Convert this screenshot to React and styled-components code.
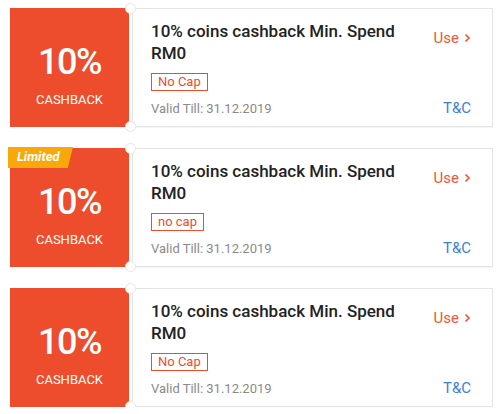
import React from "react";
import styled, { createGlobalStyle } from "styled-components";

const GlobalStyle = createGlobalStyle`
  html, body {
    margin: 0;
    padding: 0;
    background: #fff;
    font-family: Roboto, "Liberation Sans", Arial, sans-serif;
  }
`;

const List = styled.div`
  display: flex;
  flex-direction: column;
  gap: 21px;
  padding: 8px 7px 0 10px;
  width: 500px;
  box-sizing: border-box;
`;

const Ticket = styled.div`
  position: relative;
  display: flex;
  height: 119px;

  /* notches between the stub and the card */
  &::before,
  &::after {
    content: "";
    position: absolute;
    left: 115px;
    width: 9px;
    height: 9px;
    border-radius: 50%;
    background: #fff;
    border: 1px solid #e6e6e6;
    z-index: 2;
  }
  &::before {
    top: -5px;
  }
  &::after {
    bottom: -5px;
  }
`;

const Stub = styled.div`
  position: relative;
  flex: 0 0 119px;
  background: #ee4d2d;
  color: #fff;
  display: flex;
  flex-direction: column;
  align-items: center;
  padding-top: 34px;
  box-sizing: border-box;
`;

const Percent = styled.div`
  font-size: 36px;
  font-weight: 500;
  line-height: 40px;
  letter-spacing: -1.5px;
`;

const StubLabel = styled.div`
  font-size: 13px;
  line-height: 16px;
  margin-top: 10px;
`;

const Badge = styled.div`
  position: absolute;
  top: -1px;
  left: -2px;
  height: 21px;
  width: 65px;
  background: #f9a80a;
  clip-path: polygon(0 0, 100% 0, 92% 100%, 0 100%);
  color: #fff;
  font-size: 13px;
  font-weight: 700;
  font-style: italic;
  line-height: 20px;
  padding-left: 9px;
  box-sizing: border-box;
`;

const Card = styled.div`
  flex: 1;
  margin-left: 3px;
  border: 1px solid #e4e4e4;
  box-shadow: 0 1px 1px rgba(0, 0, 0, 0.04);
  display: flex;
  padding: 11px 21px 9px 18px;
`;

const Info = styled.div`
  flex: 1;
  display: flex;
  flex-direction: column;
  align-items: flex-start;
`;

const Title = styled.div`
  font-size: 17px;
  font-weight: 500;
  line-height: 22px;
  color: #222;
  width: 250px;
`;

const Tag = styled.div`
  margin-top: 9px;
  border: 1px solid #ee4d2d;
  color: #ee4d2d;
  font-size: 13px;
  line-height: 16px;
  padding: 0 6px;
`;

const Valid = styled.div`
  margin-top: auto;
  font-size: 13px;
  line-height: 16px;
  color: #8a8a8a;
`;

const Actions = styled.div`
  display: flex;
  flex-direction: column;
  align-items: flex-end;
  justify-content: space-between;
  padding-top: 9px;
`;

const Use = styled.div`
  display: flex;
  align-items: center;
  gap: 5px;
  font-size: 15px;
  line-height: 18px;
  color: #ee5838;
`;

const Terms = styled.div`
  font-size: 15px;
  line-height: 18px;
  color: #3e7fd8;
`;

const Chevron = () => (
  <svg width="7" height="10" viewBox="0 0 7 10">
    <path d="M1.5 1.5 L5 5 L1.5 8.5" fill="none" stroke="#ee5838" strokeWidth="1.7" />
  </svg>
);

const vouchers = [
  { id: 1, cap: "No Cap" },
  { id: 2, cap: "no cap", limited: true },
  { id: 3, cap: "No Cap" },
];

export default function App() {
  return (
    <>
      <GlobalStyle />
      <List>
        {vouchers.map((v) => (
          <Ticket key={v.id}>
            <Stub>
              {v.limited && <Badge>Limited</Badge>}
              <Percent>10%</Percent>
              <StubLabel>CASHBACK</StubLabel>
            </Stub>
            <Card>
              <Info>
                <Title>10% coins cashback Min. Spend RM0</Title>
                <Tag>{v.cap}</Tag>
                <Valid>Valid Till: 31.12.2019</Valid>
              </Info>
              <Actions>
                <Use>
                  Use <Chevron />
                </Use>
                <Terms>T&amp;C</Terms>
              </Actions>
            </Card>
          </Ticket>
        ))}
      </List>
    </>
  );
}
